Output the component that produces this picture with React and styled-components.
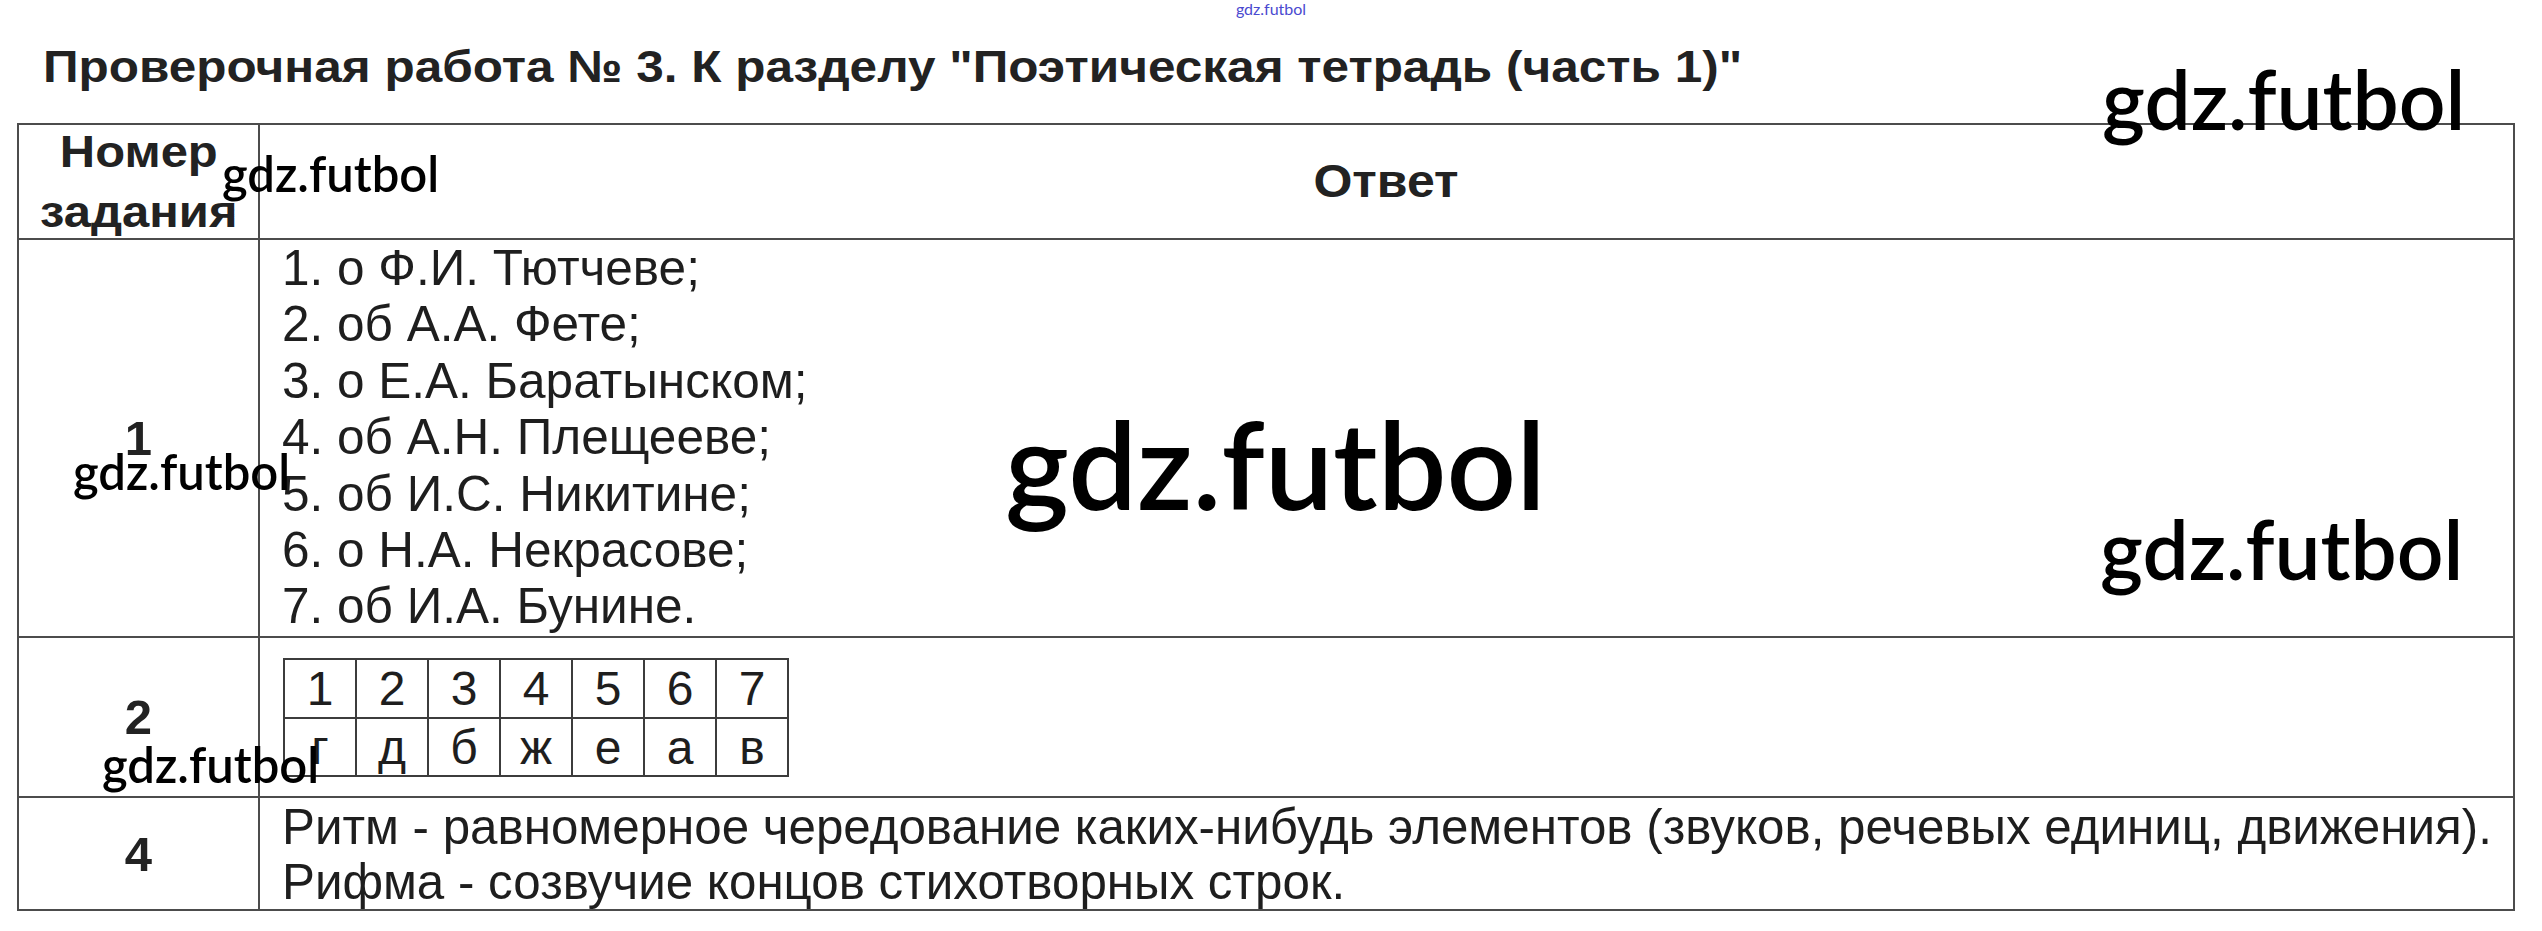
import React from 'react'
import styled, { createGlobalStyle } from 'styled-components'

const GlobalStyle = createGlobalStyle`
  html, body {
    margin: 0;
    padding: 0;
    background: #fff;
  }
`

const list = [
  '1. о Ф.И. Тютчеве;',
  '2. об А.А. Фете;',
  '3. о Е.А. Баратынском;',
  '4. об А.Н. Плещееве;',
  '5. об И.С. Никитине;',
  '6. о Н.А. Некрасове;',
  '7. об И.А. Бунине.',
]

const matchTop = ['1', '2', '3', '4', '5', '6', '7']
const matchBottom = ['г', 'д', 'б', 'ж', 'е', 'а', 'в']

const marks = [
  { left: 2102, top: 57, size: 82 },
  { left: 222, top: 149, size: 49 },
  { left: 1005, top: 402, size: 122 },
  { left: 73, top: 447, size: 49 },
  { left: 2100, top: 507, size: 82 },
  { left: 102, top: 740, size: 49 },
]

function App() {
  return (
    <Page>
      <GlobalStyle />
      <TopMark>gdz.futbol</TopMark>
      <Title>
        <Wide $origin="left center">Проверочная работа № 3. К разделу "Поэтическая тетрадь (часть 1)"</Wide>
      </Title>

      <Table>
        <NumCell $head>
          <Wide>Номер</Wide>
          <Wide>задания</Wide>
        </NumCell>
        <HeadCell>
          <Wide>Ответ</Wide>
        </HeadCell>

        <NumCell>1</NumCell>
        <AnswerCell>
          {list.map((line) => (
            <ListLine key={line}>{line}</ListLine>
          ))}
        </AnswerCell>

        <NumCell>2</NumCell>
        <AnswerCell $pad="20px 0 0 23px">
          <Match>
            {matchTop.map((c) => (
              <MatchCell key={'t' + c}>{c}</MatchCell>
            ))}
            {matchBottom.map((c) => (
              <MatchCell key={'b' + c}>{c}</MatchCell>
            ))}
          </Match>
        </AnswerCell>

        <NumCell>4</NumCell>
        <AnswerCell $pad="1px 0 0 22px">
          <Para>Ритм - равномерное чередование каких-нибудь элементов (звуков, речевых единиц, движения).</Para>
          <Para>Рифма - созвучие концов стихотворных строк.</Para>
        </AnswerCell>
      </Table>

      {marks.map((m, i) => (
        <Watermark key={i} style={{ left: m.left, top: m.top, fontSize: m.size }}>
          gdz.futbol
        </Watermark>
      ))}
    </Page>
  )
}

const Page = styled.div`
  position: relative;
  width: 2542px;
  height: 931px;
  overflow: hidden;
  background: #fff;
  color: #1e1e1e;
  font-family: "Liberation Sans", Arial, sans-serif;
`

const TopMark = styled.div`
  height: 18px;
  line-height: 18px;
  text-align: center;
  font-family: Lato, "Liberation Sans", sans-serif;
  font-size: 16px;
  color: #4a4ad0;
`

/* the bold headings of the scan are a little wider than plain Arial Bold */
const Wide = styled.span`
  display: inline-block;
  white-space: nowrap;
  transform: scaleX(1.1);
  transform-origin: ${({ $origin }) => $origin || 'center'};
`

const Title = styled.h1`
  margin: 21px 0 28px 43px;
  height: 56px;
  line-height: 56px;
  font-size: 45px;
  font-weight: 700;
  white-space: nowrap;
  color: #222;
`

const Table = styled.div`
  box-sizing: border-box;
  display: grid;
  grid-template-columns: 241px 1fr;
  grid-template-rows: 115px 398px 160px 113px;
  width: 2498px;
  margin-left: 17px;
  border: 2px solid #4c4c4c;
  border-bottom: none;
`

const Cell = styled.div`
  box-sizing: border-box;
  border-bottom: 2px solid #4c4c4c;
  min-width: 0;
`

const NumCell = styled(Cell)`
  display: flex;
  flex-direction: column;
  align-items: center;
  justify-content: center;
  border-right: 2px solid #4c4c4c;
  font-weight: 700;
  font-size: ${({ $head }) => ($head ? '44.5px' : '49px')};
  line-height: ${({ $head }) => ($head ? '60px' : '56px')};
  color: #222;
`

const HeadCell = styled(Cell)`
  display: flex;
  align-items: center;
  justify-content: center;
  font-size: 45.5px;
  font-weight: 700;
  color: #222;
`

const AnswerCell = styled(Cell)`
  padding: ${({ $pad }) => $pad || '0 0 0 22px'};
  font-size: 49.5px;
`

const ListLine = styled.div`
  line-height: 56.4px;
  white-space: nowrap;
`

const Para = styled.div`
  font-size: 49.3px;
  line-height: 55px;
  white-space: nowrap;
`

const Match = styled.div`
  display: grid;
  grid-template-columns: repeat(7, 72px);
  grid-template-rows: 59px 58px;
  width: max-content;
  border-top: 2px solid #3c3c3c;
  border-left: 2px solid #3c3c3c;
`

const MatchCell = styled.div`
  box-sizing: border-box;
  display: flex;
  align-items: center;
  justify-content: center;
  border-right: 2px solid #3c3c3c;
  border-bottom: 2px solid #3c3c3c;
  font-size: 48px;
`

const Watermark = styled.div`
  position: absolute;
  line-height: 1;
  white-space: nowrap;
  font-family: Lato, "Open Sans", sans-serif;
  font-weight: 600;
  color: #000;
`

export default App
